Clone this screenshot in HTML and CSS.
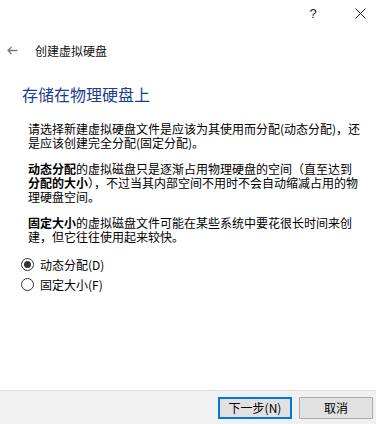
FILE: index.html
```html
<!DOCTYPE html>
<html lang="zh-CN">
<head>
<meta charset="utf-8">
<title>创建虚拟硬盘</title>
<link rel="stylesheet" href="styles.css">
</head>
<body>
<div class="window">
  <div class="titlebar">
    <span class="cap-btn help">?</span>
    <span class="cap-btn close">
      <svg width="11" height="11" viewBox="0 0 11 11"><path d="M0.5 0.5 L10.5 10.5 M10.5 0.5 L0.5 10.5" stroke="#222" stroke-width="1" fill="none"/></svg>
    </span>
  </div>
  <div class="nav">
    <svg class="back" width="11" height="9" viewBox="0 0 11 9"><path d="M10.5 4.5 H1 M4.5 1 L1 4.5 L4.5 8" stroke="#7a7a7a" stroke-width="1.3" fill="none"/></svg>
    <span class="nav-title">创建虚拟硬盘</span>
  </div>
  <main class="page">
    <h1 class="heading">存储在物理硬盘上</h1>
    <div class="body">
      <p class="para">请选择新建虚拟硬盘文件是应该为其使用而分配(动态分配)，还<br>是应该创建完全分配(固定分配)。</p>
      <p class="para"><b>动态分配</b>的虚拟磁盘只是逐渐占用物理硬盘的空间（直至达到<br><b>分配的大小</b>），不过当其内部空间不用时不会自动缩减占用的物<br>理硬盘空间。</p>
      <p class="para"><b>固定大小</b>的虚拟磁盘文件可能在某些系统中要花很长时间来创<br>建，但它往往使用起来较快。</p>
      <div class="options">
        <label class="option"><span class="radio checked"></span><span>动态分配(D)</span></label>
        <label class="option"><span class="radio"></span><span>固定大小(F)</span></label>
      </div>
    </div>
  </main>
  <footer class="footer">
    <button class="btn default">下一步(N)</button>
    <button class="btn">取消</button>
  </footer>
</div>
</body>
</html>
```
FILE: styles.css
```css
html, body {
  margin: 0;
  padding: 0;
  background: #ffffff;
}
body {
  font-family: "Noto Sans CJK SC", "Noto Sans", sans-serif;
  font-size: 12px;
  color: #000;
}
.window {
  width: 376px;
  height: 424px;
  display: flex;
  flex-direction: column;
}
.titlebar {
  height: 26px;
  display: flex;
  justify-content: flex-end;
  align-items: center;
  gap: 17px;
  padding-right: 1px;
}
.cap-btn {
  width: 30px;
  height: 26px;
  display: flex;
  align-items: center;
  justify-content: center;
  color: #222;
}
.help {
  font-family: "Liberation Sans", sans-serif;
  font-size: 13px;
}
.nav {
  height: 24px;
  margin-top: 12px;
  display: flex;
  align-items: center;
  padding-left: 7px;
}
.back {
  margin-right: 17px;
}
.nav-title {
  font-size: 12px;
  color: #111;
}
.page {
  flex: 1;
  padding-top: 22px;
}
.heading {
  margin: 0 0 18px 22px;
  font-size: 16px;
  font-weight: normal;
  line-height: 20px;
  color: #1c3b94;
}
.body {
  padding-left: 28px;
}
.para {
  margin: 0 0 12px 0;
  line-height: 14px;
  white-space: nowrap;
}
.para b {
  font-weight: bold;
}
.options {
  display: flex;
  flex-direction: column;
  gap: 4px;
  margin-left: -7px;
}
.option {
  display: flex;
  align-items: center;
  height: 16px;
  gap: 6px;
}
.radio {
  width: 11px;
  height: 11px;
  border: 1px solid #333;
  border-radius: 50%;
  background: #fff;
  display: flex;
  align-items: center;
  justify-content: center;
}
.radio.checked::after {
  content: "";
  width: 7px;
  height: 7px;
  border-radius: 50%;
  background: #333;
}
.footer {
  height: 33px;
  border-top: 1px solid #dfdfdf;
  background: #f0f0f0;
  display: flex;
  justify-content: flex-end;
  align-items: center;
  gap: 7px;
  padding-right: 3px;
}
.btn {
  width: 74px;
  height: 22px;
  margin-top: 0px;
  background: #e1e1e1;
  border: 1px solid #adadad;
  font-family: "Noto Sans CJK SC", sans-serif;
  font-size: 12px;
  color: #000;
  padding: 0;
  line-height: 18px;
}
.btn.default {
  border: 2px solid #0078d7;
}
```
